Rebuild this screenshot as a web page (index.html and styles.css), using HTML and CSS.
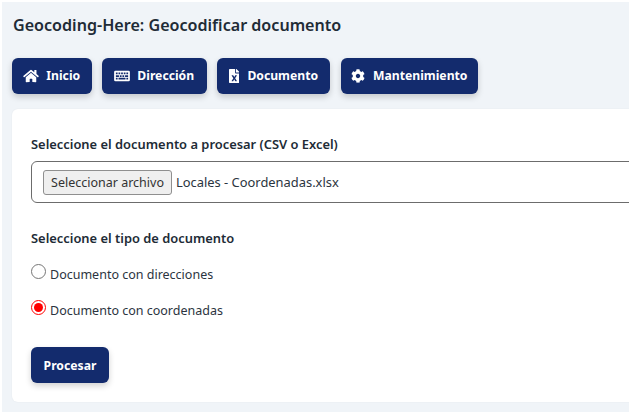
FILE: index.html
```html
<!DOCTYPE html>
<html lang="en">
<head>
  <meta charset="UTF-8" />
  <title>Geocoding-Here</title>
  <link rel="stylesheet" href="styles.css">
</head>
<body>
  <div class="page">
    <h1 class="page-title">Geocoding-Here: Geocodificar documento</h1>

    <nav class="nav">
      <a class="btn nav-inicio" href="#">
        <svg class="icon icon-home" viewBox="0 0 576 512"><path d="M280.37 148.26L96 300.11V464a16 16 0 0 0 16 16l112.06-.29a16 16 0 0 0 15.92-16V368a16 16 0 0 1 16-16h64a16 16 0 0 1 16 16v95.64a16 16 0 0 0 16 16.05L464 480a16 16 0 0 0 16-16V300L295.67 148.26a12.19 12.19 0 0 0-15.3 0zM571.6 251.47L488 182.56V44.05a12 12 0 0 0-12-12h-56a12 12 0 0 0-12 12v72.61L318.47 43a48 48 0 0 0-61 0L4.34 251.47a12 12 0 0 0-1.6 16.9l25.5 31A12 12 0 0 0 45.15 301l235.22-193.74a12.19 12.19 0 0 1 15.3 0L530.9 301a12 12 0 0 0 16.9-1.6l25.5-31a12 12 0 0 0-1.7-16.93z"/></svg>
        Inicio
      </a>
      <a class="btn nav-direccion" href="#">
        <svg class="icon icon-keyboard" viewBox="0 0 576 512"><path fill-rule="evenodd" d="M48 64h480a48 48 0 0 1 48 48v288a48 48 0 0 1-48 48H48a48 48 0 0 1-48-48V112a48 48 0 0 1 48-48zM64 128v64h64v-64zM160 128v64h64v-64zM256 128v64h64v-64zM352 128v64h64v-64zM448 128v64h64v-64zM64 224v64h112v-64zM208 224v64h64v-64zM304 224v64h64v-64zM400 224v64h112v-64zM64 320v64h64v-64zM160 320v64h256v-64zM448 320v64h64v-64z"/></svg>
        Dirección
      </a>
      <a class="btn nav-documento" href="#">
        <svg class="icon icon-file" viewBox="0 0 384 512"><path d="M224 136V0H24C10.7 0 0 10.7 0 24v464c0 13.3 10.7 24 24 24h336c13.3 0 24-10.7 24-24V160H248c-13.2 0-24-10.8-24-24zm60.1 106.5L224 336l60.1 93.5c5.1 8-.6 18.5-10.1 18.5h-34.9c-4.4 0-8.5-2.4-10.6-6.3C208.9 405.5 192 373 192 373c-6.1 14.1-9.5 19-36.6 68.8-2.1 3.9-6.1 6.3-10.5 6.3H110c-9.5 0-15.2-10.5-10.1-18.5l60.3-93.5-60.3-93.5c-5.2-8 .6-18.5 10.1-18.5h34.8c4.4 0 8.5 2.4 10.6 6.3 26.1 48.8 20 33.6 36.6 68.5 0 0 6.1-11.7 36.6-68.5 2.1-3.9 6.2-6.3 10.6-6.3H274c9.5-.1 15.2 10.4 10.1 18.4zM384 121.9v6.1H256V0h6.1c6.4 0 12.5 2.5 17 7l97.9 98c4.5 4.5 7 10.6 7 16.9z"/></svg>
        Documento
      </a>
      <a class="btn nav-mant" href="#">
        <svg class="icon icon-cog" viewBox="0 0 512 512"><path d="M487.4 315.7l-42.6-24.6c4.3-23.2 4.3-47 0-70.2l42.6-24.6c4.9-2.8 7.1-8.6 5.5-14-11.1-35.6-30-67.8-54.7-94.6-3.8-4.1-10-5.1-14.8-2.3L380.8 110c-17.9-15.4-38.5-27.3-60.8-35.1V25.8c0-5.6-3.9-10.5-9.4-11.7-36.7-8.2-74.3-7.8-109.2 0-5.5 1.2-9.4 6.1-9.4 11.7V75c-22.2 7.9-42.8 19.8-60.8 35.1L88.7 85.5c-4.9-2.8-11-1.9-14.8 2.3-24.7 26.7-43.6 58.9-54.7 94.6-1.7 5.4.6 11.2 5.5 14L67.3 221c-4.3 23.2-4.3 47 0 70.2l-42.6 24.6c-4.9 2.8-7.1 8.6-5.5 14 11.1 35.6 30 67.8 54.7 94.6 3.8 4.1 10 5.1 14.8 2.3l42.6-24.6c17.9 15.4 38.5 27.3 60.8 35.1v49.2c0 5.6 3.9 10.5 9.4 11.7 36.7 8.2 74.3 7.8 109.2 0 5.5-1.2 9.4-6.1 9.4-11.7v-49.2c22.2-7.9 42.8-19.8 60.8-35.1l42.6 24.6c4.9 2.8 11 1.9 14.8-2.3 24.7-26.7 43.6-58.9 54.7-94.6 1.5-5.5-.7-11.3-5.6-14.1zM256 336c-44.1 0-80-35.9-80-80s35.9-80 80-80 80 35.9 80 80-35.9 80-80 80z"/></svg>
        Mantenimiento
      </a>
    </nav>

    <form class="card">
      <label class="field-label">Seleccione el documento a procesar (CSV o Excel)</label>
      <div class="file-box">
        <button type="button" class="file-btn">Seleccionar archivo</button>
        <span class="file-name">Locales - Coordenadas.xlsx</span>
      </div>

      <label class="field-label type-label">Seleccione el tipo de documento</label>
      <label class="radio-row">
        <input type="radio" name="tipo" />
        <span>Documento con direcciones</span>
      </label>
      <label class="radio-row">
        <input type="radio" name="tipo" checked />
        <span>Documento con coordenadas</span>
      </label>

      <button type="button" class="btn submit">Procesar</button>
    </form>
  </div>
</body>
</html>
```

FILE: styles.css
```css
* {
  box-sizing: border-box;
}
html, body {
  height: 100%;
}
body {
  margin: 0;
  background: #fff;
  font-family: "Noto Sans", sans-serif;
  color: #212b36;
  overflow: hidden;
}
.page {
  width: 627px;
  height: 410px;
  margin: 2px 0 0 2px;
  padding: 13px 0 0 10px;
  background: #f0f4f8;
  overflow: hidden;
}
.page-title {
  margin: 0 0 0 1px;
  font-size: 16.1px;
  line-height: 21px;
  font-weight: 600;
  color: #212b36;
}
.nav {
  display: flex;
  gap: 10.5px;
  margin-top: 22px;
}
.btn {
  display: inline-flex;
  align-items: center;
  justify-content: center;
  height: 36px;
  padding-bottom: 1px;
  border: none;
  border-radius: 6px;
  background: #132b6d;
  color: #fff;
  font-family: inherit;
  font-size: 12.2px;
  font-weight: 700;
  text-decoration: none;
  box-shadow: 0 3px 6px rgba(0, 0, 0, 0.18);
}
.nav-inicio { width: 79.5px; }
.nav-direccion { width: 104.5px; }
.nav-documento { width: 113px; }
.nav-mant { width: 137.5px; }
.icon {
  fill: #fff;
  height: 14px;
  margin-right: 7px;
}
.icon-home { width: 16px; }
.icon-keyboard { width: 16px; }
.icon-file { width: 10.5px; margin-right: 8px; }
.icon-cog { width: 14px; margin-right: 8px; }
.card {
  display: flex;
  flex-direction: column;
  align-items: flex-start;
  width: 700px;
  height: 293px;
  margin-top: 15px;
  padding: 26px 19px 0;
  background: #fff;
  border-radius: 6px;
  box-shadow: 0 0 2px rgba(0, 0, 0, 0.06);
}
.field-label {
  font-size: 12.9px;
  line-height: 18px;
  font-weight: 600;
  color: #212b36;
}
.file-box {
  display: flex;
  align-items: center;
  width: 100%;
  height: 42px;
  margin-top: 8px;
  padding-left: 11px;
  border: 1px solid #6c6c6c;
  border-radius: 6px;
}
.file-btn {
  width: 129px;
  height: 25px;
  padding: 0;
  background: #efefef;
  border: 1px solid #8f8f8f;
  border-radius: 3px;
  font-family: inherit;
  font-size: 12.5px;
  color: #333;
}
.file-name {
  margin-left: 4px;
  font-size: 12.9px;
  color: #2b3440;
}
.type-label {
  margin-top: 26px;
}
.radio-row {
  display: flex;
  align-items: center;
  gap: 4px;
  height: 20px;
  font-size: 12.5px;
  color: #2b3440;
}
.radio-row input {
  width: 15px;
  height: 15px;
  margin: 0;
  accent-color: #f00;
  position: relative;
  top: -3px;
}
.type-label + .radio-row {
  margin-top: 17px;
}
.radio-row + .radio-row {
  margin-top: 16px;
}
.submit {
  width: 78px;
  margin-top: 27px;
}
```
